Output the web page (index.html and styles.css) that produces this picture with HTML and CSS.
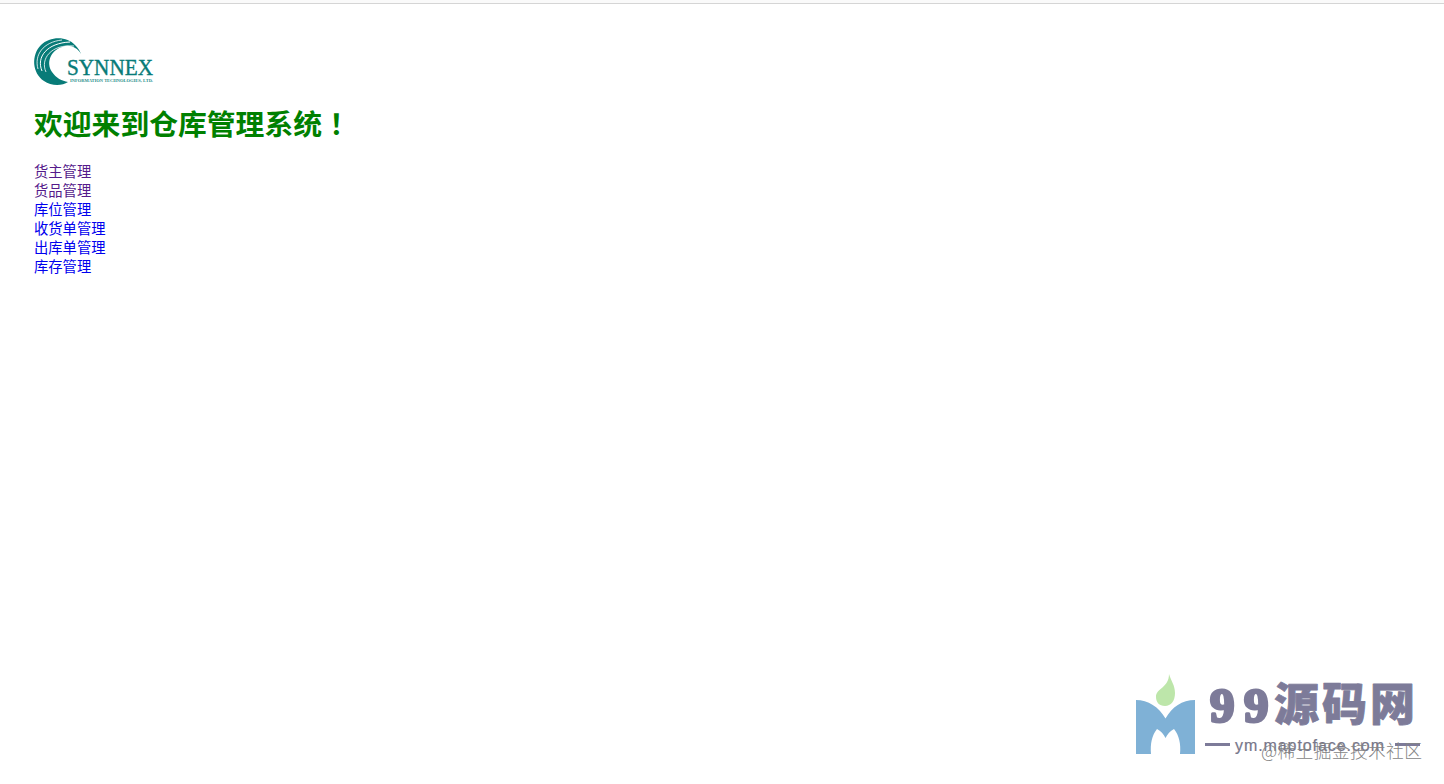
FILE: index.html
```
<!DOCTYPE html>
<html lang="zh-CN">
<head>
    <meta charset="UTF-8">
    <title>仓库管理系统</title>
    <link rel="stylesheet" href="styles.css">
</head>
<body>
    <div class="top-line"></div>
    <div class="content">
        <svg class="logo" viewBox="0 0 120 48">
            <path d="M34 44C28 48 17 48 10 43C-2 35 -3 17 7 7C16 -2 33 -2 41 7C44 10 46 13 47 16C43 9 35 6 28 9C16 13 12 25 18 34C22 40 28 43 34 44Z" fill="#087b78"/>
            <g fill="none" stroke="#fff">
                <path d="M4 31C0 17 9 4 28 2" stroke-width="0.8"/>
                <path d="M8 33C2 19 13 5 36 4" stroke-width="1"/>
                <path d="M12 34C6 21 17 6 40 8" stroke-width="0.8"/>
            </g>
            <text class="logo-name" x="33" y="37" textLength="86" lengthAdjust="spacingAndGlyphs">SYNNEX</text>
            <text class="logo-sub" x="36" y="43.500" textLength="83" lengthAdjust="spacingAndGlyphs">INFORMATION TECHNOLOGIES, LTD.</text>
        </svg>
        <h1>欢迎来到仓库管理系统<span class="mark" lang="zh-TW">！</span></h1>
        <nav class="menu">
            <a class="visited" href="#">货主管理</a>
            <a class="visited" href="#">货品管理</a>
            <a href="#">库位管理</a>
            <a href="#">收货单管理</a>
            <a href="#">出库单管理</a>
            <a href="#">库存管理</a>
        </nav>
    </div>

    <!-- 右下角水印 -->
    <svg class="watermark" viewBox="0 0 304 112">
        <path d="M11 35C23 35 34 42 40.500 53.500C47 42 57 35 70 35V89H55C56 79 54 70 49 64C45 66 42.500 69 40.500 73C38.500 69 36 66 32 64C27 70 25 79 26 89H11Z" fill="#7fb1d6"/>
        <path d="M44 9C46 16 50 20 50 28C50 36 46 41 40 41C34 41 31 37 31 32C31 23 44 23 44 9Z" fill="#bde6aa"/>
        <text class="brand-num" x="85 119" y="57">99</text>
        <text class="brand-name" x="149" y="56" textLength="141">源码网</text>
        <path d="M80 79.500H105M270 79.500H295" stroke="#7d7b99" stroke-width="3"/>
        <text class="brand-url" x="110" y="86" textLength="149">ym.maptoface.com</text>
        <text class="author" x="136" y="93" textLength="161">@稀土掘金技术社区</text>
    </svg>
</body>
</html>
```
FILE: styles.css
```
body {
    margin: 0;
    background: #fff;
    font-family: "Noto Sans CJK SC", sans-serif;
}

.top-line {
    height: 3px;
    background: #fafafa;
    border-bottom: 1px solid #d5d5d5;
}

.content {
    padding: 34px 34px 0;
}

.logo {
    display: block;
    width: 120px;
    height: 48px;
    overflow: visible;
}

.logo-name {
    font: 24px "Liberation Serif", serif;
    fill: #087b78;
    stroke: #087b78;
    stroke-width: 0.4px;
}

.logo-sub {
    font: bold 5px "Liberation Serif", serif;
    fill: #2b8f8c;
}

h1 {
    margin: 17px 0 18px;
    font-size: 28.8px;
    line-height: 40px;
    font-weight: bold;
    color: green;
}

/* 繁体字形的感叹号居中 */
.mark {
    font-family: "Noto Sans CJK TC", sans-serif;
}

.menu {
    display: flex;
    flex-direction: column;
    align-items: flex-start;
}

.menu a {
    font-size: 14.3px;
    line-height: 19px;
    color: #0000ee;
    text-decoration: none;
}

.menu a.visited {
    color: #551a8b;
}

.watermark {
    position: absolute;
    left: 1125px;
    top: 665px;
    width: 304px;
    height: 112px;
}

.brand-num {
    font: bold 49px "Liberation Serif", serif;
    fill: #7d7b99;
    stroke: #7d7b99;
    stroke-width: 3px;
    stroke-linejoin: round;
}

.brand-name {
    font: 900 45px "Noto Sans CJK SC", sans-serif;
    fill: #7d7b99;
    stroke: #7d7b99;
    stroke-width: 0.8px;
    stroke-linejoin: round;
}

.brand-url {
    font: 16px "Liberation Sans", sans-serif;
    fill: #77768a;
    stroke: #77768a;
    stroke-width: 0.2px;
}

.author {
    font: 300 17.8px "Noto Sans CJK SC", sans-serif;
    fill: #858585;
}
```
